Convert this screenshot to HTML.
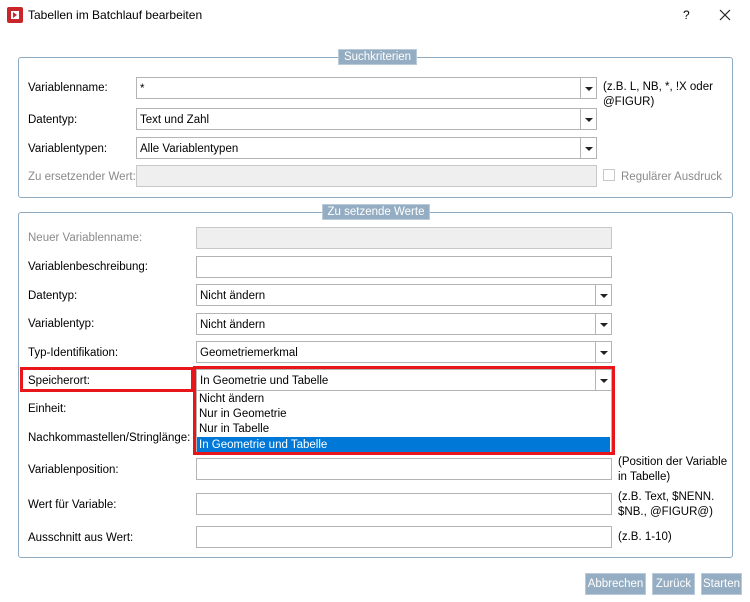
<!DOCTYPE html>
<html><head><meta charset="utf-8"><style>
*{box-sizing:border-box;margin:0;padding:0}
body{width:750px;height:602px;background:#fff;font-family:"Liberation Sans",sans-serif;font-size:11.5px;color:#000;position:relative;overflow:hidden}
.a{position:absolute;white-space:nowrap}
.grp{position:absolute;border:1px solid #8faabe;border-radius:3px}
.leg{position:absolute;background:#94adc2;color:#fff;border:1px solid #b9cad8;height:16px;line-height:14px;text-align:center;font-size:11.5px}
.in{position:absolute;border:1px solid #b4b4b4;background:#fff;height:22px;line-height:22px;padding-left:3px}
.dis{background:#efefef;border-color:#c8c8c8}
.dd{position:absolute;right:0;top:0;width:16px;height:20px;border-left:1px solid #b4b4b4}
.dd:after{content:"";position:absolute;left:4px;top:9px;border-left:4px solid transparent;border-right:4px solid transparent;border-top:4px solid #222}
.lab{position:absolute;white-space:nowrap;line-height:14px}
.g{color:#8a8a8a}
.btn{position:absolute;background:#94adc2;color:#fff;border:1px solid #b9cad8;height:22px;line-height:20px;text-align:center;font-size:11.5px}
</style></head><body>
<div class="a" style="left:7px;top:7px;width:16px;height:16px;background:#c8262b;border-radius:2px"><div style="position:absolute;left:4px;top:4px;width:8px;height:8px;background:#fff"></div><div style="position:absolute;left:6px;top:5px;border-top:3px solid transparent;border-bottom:3px solid transparent;border-left:4px solid #c8262b"></div></div>
<div class="a" style="left:28px;top:8px;font-size:12px">Tabellen im Batchlauf bearbeiten</div>
<div class="a" style="left:683px;top:8px;font-size:12px">?</div>
<svg class="a" style="left:719px;top:9px" width="12" height="12"><path d="M1 1L11 11M11 1L1 11" stroke="#222" stroke-width="1.2"/></svg>

<div class="grp" style="left:18px;top:57px;width:715px;height:141px"></div>
<div class="leg" style="left:338px;top:49px;width:79px">Suchkriterien</div>
<div class="lab" style="left:28px;top:81px">Variablenname:</div>
<div class="in" style="left:136px;top:77px;width:461px">*<div class="dd"></div></div>
<div class="lab" style="left:603px;top:80px;white-space:normal;width:130px;line-height:15px">(z.B. L, NB, *, !X oder @FIGUR)</div>
<div class="lab" style="left:28px;top:113px">Datentyp:</div>
<div class="in" style="left:136px;top:108px;width:461px">Text und Zahl<div class="dd"></div></div>
<div class="lab" style="left:28px;top:142px">Variablentypen:</div>
<div class="in" style="left:136px;top:137px;width:461px">Alle Variablentypen<div class="dd"></div></div>
<div class="lab g" style="left:28px;top:170px">Zu ersetzender Wert:</div>
<div class="in dis" style="left:136px;top:165px;width:461px"></div>
<div class="a" style="left:603px;top:169px;width:12px;height:12px;border:1px solid #c8c8c8"></div>
<div class="lab g" style="left:621px;top:170px">Regulärer Ausdruck</div>

<div class="grp" style="left:18px;top:212px;width:715px;height:346px"></div>
<div class="leg" style="left:322px;top:204px;width:108px">Zu setzende Werte</div>
<div class="lab g" style="left:28px;top:231px">Neuer Variablenname:</div>
<div class="in dis" style="left:196px;top:227px;width:416px"></div>
<div class="lab" style="left:28px;top:260px">Variablenbeschreibung:</div>
<div class="in" style="left:196px;top:256px;width:416px"></div>
<div class="lab" style="left:28px;top:289px">Datentyp:</div>
<div class="in" style="left:196px;top:284px;width:416px">Nicht ändern<div class="dd"></div></div>
<div class="lab" style="left:28px;top:317px">Variablentyp:</div>
<div class="in" style="left:196px;top:313px;width:416px">Nicht ändern<div class="dd"></div></div>
<div class="lab" style="left:28px;top:346px">Typ-Identifikation:</div>
<div class="in" style="left:196px;top:341px;width:416px">Geometriemerkmal<div class="dd"></div></div>
<div class="lab" style="left:28px;top:374px">Speicherort:</div>
<div class="in" style="left:196px;top:369px;width:416px">In Geometrie und Tabelle<div class="dd"></div></div>
<div class="a" style="left:196px;top:391px;width:416px;height:62px;border:1px solid #b4b4b4;background:#fff;border-top:none"></div>
<div class="lab" style="left:199px;top:392px">Nicht ändern</div>
<div class="lab" style="left:199px;top:407px">Nur in Geometrie</div>
<div class="lab" style="left:199px;top:422px">Nur in Tabelle</div>
<div class="a" style="left:197px;top:437px;width:413px;height:15px;background:#0078d7"></div>
<div class="lab" style="left:199px;top:438px;color:#fff">In Geometrie und Tabelle</div>
<div class="a" style="left:20px;top:367px;width:174px;height:25px;border:3px solid #e8161b"></div>
<div class="a" style="left:193px;top:366px;width:422px;height:89px;border:3px solid #e8161b"></div>
<div class="lab" style="left:28px;top:402px">Einheit:</div>
<div class="lab" style="left:28px;top:431px">Nachkommastellen/Stringlänge:</div>
<div class="lab" style="left:28px;top:463px">Variablenposition:</div>
<div class="in" style="left:196px;top:458px;width:416px"></div>
<div class="lab" style="left:618px;top:455px;white-space:normal;width:115px;line-height:15px">(Position der Variable in Tabelle)</div>
<div class="lab" style="left:28px;top:498px">Wert für Variable:</div>
<div class="in" style="left:196px;top:493px;width:416px"></div>
<div class="lab" style="left:618px;top:490px;white-space:normal;width:115px;line-height:15px">(z.B. Text, $NENN. $NB., @FIGUR@)</div>
<div class="lab" style="left:28px;top:531px">Ausschnitt aus Wert:</div>
<div class="in" style="left:196px;top:526px;width:416px"></div>
<div class="lab" style="left:618px;top:530px">(z.B. 1-10)</div>

<div class="btn" style="left:585px;top:573px;width:61px">Abbrechen</div>
<div class="btn" style="left:652px;top:573px;width:43px">Zurück</div>
<div class="btn" style="left:701px;top:573px;width:41px">Starten</div>
</body></html>
